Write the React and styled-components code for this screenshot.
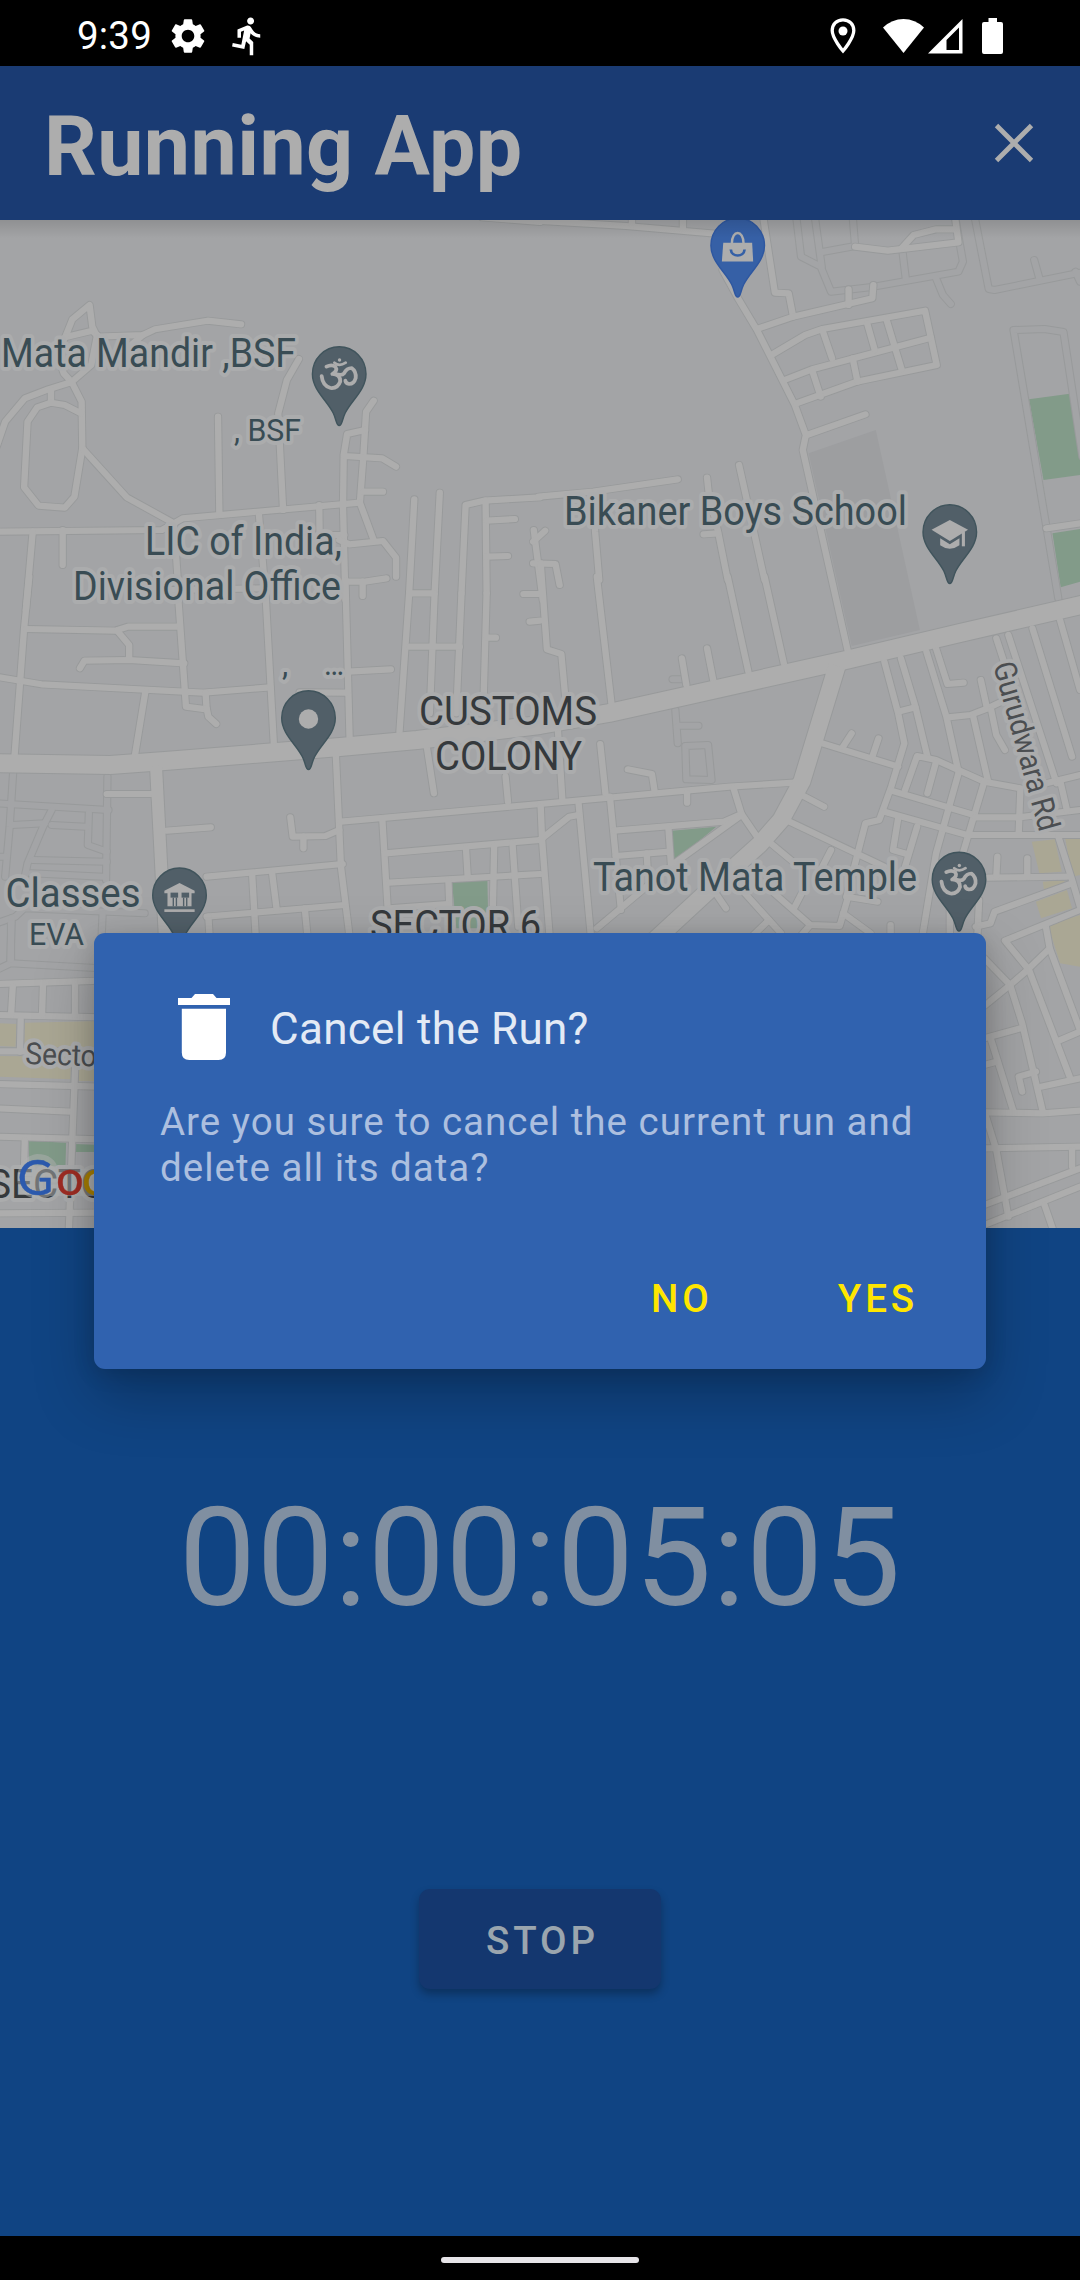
import React from "react";
import styled, { createGlobalStyle } from "styled-components";
import { MdSettings, MdDirectionsRun } from "react-icons/md";

const GlobalStyle = createGlobalStyle`
  html, body { margin: 0; padding: 0; background: #000; }
  body { font-family: Roboto, "Noto Sans", sans-serif; }
  *, *::before, *::after { box-sizing: border-box; }
`;

const Screen = styled.div`
  position: relative;
  display: flex;
  flex-direction: column;
  width: 1080px;
  height: 2280px;
  overflow: hidden;
  background: #000;
`;

const StatusBar = styled.header`
  display: flex;
  justify-content: space-between;
  align-items: center;
  flex: none;
  height: 66px;
  padding: 5px 77px 0 77px;
  color: #fff;
`;

const StatusGroup = styled.div`
  display: flex;
  align-items: center;
  gap: ${(p) => p.$gap}px;
`;

const Clock = styled.span`
  width: 72px;
  font-size: 38.5px;
  line-height: 46px;
  letter-spacing: 0.2px;
  white-space: nowrap;
`;

const AppBar = styled.div`
  display: flex;
  justify-content: space-between;
  align-items: center;
  flex: none;
  height: 154px;
  padding: 8px 46px 0 44px;
  background: #1a3b73;
  color: #adadad;
`;

const AppTitle = styled.h1`
  margin: 0;
  font-size: 82.5px;
  font-weight: 700;
  line-height: 96px;
  letter-spacing: 0.4px;
  white-space: nowrap;
`;

const IconButton = styled.button`
  display: flex;
  padding: 0;
  margin-top: -8px;
  border: 0;
  background: none;
  color: inherit;
`;

const MapPane = styled.section`
  position: relative;
  flex: none;
  height: 1008px;
  background: #a3a4a6;

  &::after {
    content: "";
    position: absolute;
    inset: 0 0 auto 0;
    height: 18px;
    background: linear-gradient(rgba(0, 0, 0, 0.12), rgba(0, 0, 0, 0));
  }

  svg { display: block; }
`;

const RunPane = styled.section`
  display: flex;
  flex-direction: column;
  align-items: center;
  flex: 1;
  padding-top: 250px;
  background: #104483;
`;

const Timer = styled.div`
  font-size: 137.5px;
  line-height: 161px;
  letter-spacing: 0.4px;
  color: #808fa1;
  white-space: nowrap;
`;

const StopButton = styled.button`
  display: flex;
  align-items: center;
  justify-content: center;
  width: 242px;
  height: 100px;
  margin-top: 250px;
  padding: 2px 0 0 5px;
  border: 0;
  border-radius: 11px;
  background: #14376f;
  box-shadow: 0 5px 9px rgba(0, 0, 0, 0.28);
  color: #9aa5ae;
  font: 500 38.5px Roboto, sans-serif;
  letter-spacing: 3.9px;
`;

const NavBar = styled.footer`
  display: flex;
  justify-content: center;
  flex: none;
  height: 44px;
  padding-top: 21px;
`;

const NavHandle = styled.div`
  width: 198px;
  height: 6px;
  border-radius: 3px;
  background: #e6e4e8;
`;

const Dialog = styled.div`
  position: absolute;
  left: 94px;
  top: 933px;
  display: flex;
  flex-direction: column;
  width: 892px;
  height: 436px;
  padding: 61px 66px 0;
  border-radius: 11px;
  background: #3062af;
  box-shadow: 0 26px 60px rgba(0, 0, 0, 0.26), 0 4px 22px rgba(0, 0, 0, 0.14);
`;

const DialogHeader = styled.div`
  display: flex;
  align-items: center;
  gap: 40px;
  height: 66px;
  padding-left: 18px;
`;

const DialogTitle = styled.h2`
  margin: 4px 0 0;
  font-size: 44px;
  font-weight: 400;
  line-height: 52px;
  letter-spacing: 0.3px;
  color: #e3eaf5;
  white-space: nowrap;
`;

const DialogMessage = styled.p`
  margin: 39px 0 0;
  font-size: 38.5px;
  line-height: 46px;
  letter-spacing: 1px;
  color: #acbfdf;
  white-space: nowrap;
`;

const DialogActions = styled.div`
  display: flex;
  justify-content: flex-end;
  gap: 125px;
  margin: 85px 2px 0 0;
`;

const DialogAction = styled.button`
  padding: 0;
  border: 0;
  background: none;
  color: #ffe600;
  font: 500 38.5px/46px Roboto, sans-serif;
  letter-spacing: 3.9px;
`;

/* ---------- map data ---------- */

const SX = 540 / 1568;
const SY = 1 / 3;

/* Each tile has its own survey grid, placed on the map by origin. */
const TILES = [
  {
    at: [0, 210],
    main: [
      "M190 380 L210 328 L260 285 L268 350 L280 375",
      "M195 380 L268 362 L285 380 L415 375 L450 358 L603 332 L700 343",
      "M190 380 L165 430 L185 490 L208 516 L265 465 L282 375",
      "M375 410 L415 375",
      "M-10 710 L15 635 L72 565 L140 538 L208 516 L237 575 L239 715",
      "M148 540 L148 578",
      "M235 610 L188 585 L148 578 L108 592 L80 635 L70 832 L112 887 L188 893 L216 860 L239 715",
      "M239 715 L368 862 L505 940 L530 925 L1045 878 L1055 740 L1063 605 L1085 572",
      "M-10 965 L470 960 L505 940 L520 1170",
      "M182 960 L182 1065", "M95 965 L75 1200", "M633 620 L637 915",
      "M868 447 L833 510 L808 610 L822 900", "M752 915 L772 1170",
      "M927 885 L928 975 L1000 975", "M1060 660 L1008 672 L998 735 L996 890 L1003 1170",
      "M1000 738 L1110 745 L1150 770", "M1055 845 L1112 845", "M1045 878 L1085 990",
      "M985 990 L1015 1003 L1112 993 L1150 1043 L1150 1100",
      "M1000 1115 L1060 1115 L1122 1105", "M1053 1115 L1053 1158",
      "M1203 868 L1188 1150", "M1277 848 L1262 1150",
      "M1568 862 L1405 872 L1352 885 L1340 1150", "M1410 872 L1413 1150",
      "M1413 932 L1495 927", "M1413 1040 L1475 1038",
      "M1550 960 L1556 1010 L1576 1170", "M490 1140 L760 1135",
      "M1400 22 L1568 36",
    ],
    minor: [],
    green: [], sand: [], built: [],
  },
  {
    at: [540, 210],
    main: [
      "M-10 32 L250 48 L520 72", "M267 20 L267 45", "M415 20 L415 60",
      "M530 180 L575 265 L630 360 L740 585 L772 675 L763 720 L893 1320",
      "M648 20 L682 248 L722 250 L735 320",
      "M630 357 L735 320 L965 265 L968 225", "M896 285 L896 238",
      "M672 435 L770 375 L820 357 L1118 302 L1152 465 L920 515 L745 580",
      "M710 510 L790 478 L1135 383",
      "M820 360 L848 445", "M950 340 L972 420", "M1005 325 L1050 478",
      "M908 445 L922 515", "M790 480 L815 560", "M775 675 L945 613",
      "M-4 860 L155 845 L400 808", "M155 850 L160 965 L172 1110",
      "M485 803 L490 850 L517 965 L545 1110", "M578 765 L620 960 L652 1110",
      "M517 970 L475 973", "M-20 995 L15 962", "M-20 1060 L45 1062 L57 1125",
      "M1470 955 L1568 940",
      "M915 110 L1010 122 L1215 97 L1205 20", "M1050 115 L1085 75 L1150 58 L1205 58",
    ],
    minor: [
      "M744 20 L758 140 L815 170 L845 245 L970 230 L1215 185 L1228 155 L1205 20",
      "M798 20 L818 170", "M908 20 L915 108 L820 126", "M1052 120 L1062 205",
      "M1150 205 L1170 255 L1193 282",
      "M1262 20 L1303 237 L1320 240 L1568 188", "M1435 150 L1450 205", "M1555 185 L1568 215",
      "M1505 1165 L1375 360 L1465 357 L1520 366 L1575 740",
    ],
    green: ["1420,568 1538,551 1568,735 1568,795 1462,810", "1488,970 1568,957 1568,1115 1512,1132"],
    sand: [],
    built: ["780,730 975,660 1103,1260 905,1308"],
  },
  {
    at: [0, 580],
    main: [
      "M85 -10 L70 145 L42 530", "M75 147 L335 152 L372 140 L520 140",
      "M340 152 L375 195 L375 240", "M232 265 L245 242 L375 240 L535 250",
      "M-10 290 L120 313 L590 338 L785 322",
      "M518 60 L540 380 L600 388 L597 340", "M600 385 L605 410 L628 432",
      "M422 335 L392 525", "M772 60 L795 490", "M1003 0 L1015 470",
      "M1010 275 L1135 268", "M870 337 L1008 338",
      "M1188 40 L1160 455", "M1262 40 L1248 400", "M1340 40 L1325 400", "M1413 40 L1403 400",
      "M1190 200 L1335 200", "M1190 40 L1260 40", "M1413 173 L1440 173",
      "M1568 42 L1520 42", "M1568 122 L1538 125",
      "M310 642 L445 642", "M485 752 L612 742",
      "M843 712 L850 770 L945 768 L985 750", "M881 770 L881 805",
      "M975 520 L990 860 L1015 1070",
      "M990 725 L1568 672", "M1110 715 L1130 1060", "M1120 820 L1568 780",
      "M1130 908 L1568 882", "M600 890 L995 852", "M600 1010 L1000 975",
      "M732 880 L742 1060", "M790 878 L803 985", "M605 1010 L608 1060", "M885 985 L892 1060",
      "M1240 505 L1260 640", "M1468 590 L1475 665",
      "M1353 805 L1358 890", "M1435 795 L1430 1040", "M1488 790 L1505 1040",
      "M1302 900 L1305 985", "M1130 985 L1300 972",
    ],
    minor: [
      "M-10 670 L315 690", "M312 590 L308 900", "M38 580 L28 740 L15 890",
      "M35 735 L130 730", "M150 690 L125 740 L80 850 L70 900",
      "M258 700 L255 795 L310 815", "M150 735 L250 740", "M95 840 L310 845",
      "M90 880 L300 890", "M-10 830 L15 830",
      "M-10 1030 L45 1010 L70 985 L420 1000", "M34 1015 L30 1140", "M298 1000 L295 1070",
    ],
    green: ["1312,903 1415,893 1417,990 1385,1045 1325,1045"],
    sand: [], built: [],
  },
  {
    at: [540, 580],
    main: [
      "M2 -50 L20 208 L62 222 L75 370", "M165 -10 L208 375", "M545 -10 L605 275",
      "M652 -10 L708 250", "M412 235 L425 315", "M485 205 L503 300",
      "M0 672 L550 620 L750 607", "M52 450 L65 660", "M175 492 L190 640",
      "M255 568 L325 582 L333 635", "M427 640 L427 668",
      "M203 650 L235 990", "M112 670 L148 1070", "M0 780 L85 710 L112 705",
      "M2 680 L6 780 L15 900 L28 1070",
      "M215 752 L535 725 L585 702 L562 625", "M585 702 L640 785",
      "M585 705 L390 850 L165 1045", "M220 828 L375 815", "M373 745 L380 850", "M310 820 L312 860",
      "M820 490 L1040 560", "M880 500 L905 460", "M965 530 L983 475", "M760 645 L825 680",
      "M1000 245 L1040 400 L1058 490 L1020 620 L985 720 L945 730 L890 950",
      "M1048 235 L1090 380 L1125 530", "M1040 395 L1090 382",
      "M1122 215 L1180 410 L1215 575", "M1150 205 L1183 312 L1230 308",
      "M1185 412 L1250 405 L1300 385 L1340 365", "M1280 300 L1298 385",
      "M1258 410 L1300 600", "M1310 390 L1325 465 L1350 510",
      "M1325 175 L1355 270", "M1360 165 L1500 610", "M1430 145 L1545 530", "M1510 120 L1568 330",
      "M725 725 L1000 860", "M670 790 L740 850",
      "M1060 630 L1095 528 L1150 540 L1290 605 L1395 625 L1390 760",
      "M1150 545 L1125 640", "M1215 580 L1150 820 L1110 1070", "M1290 605 L1225 830",
      "M1020 632 L1260 705", "M1000 695 L1240 765 L1568 765",
      "M1265 712 L1390 712 L1568 690", "M1470 610 L1568 585", "M1510 600 L1530 690",
      "M1040 715 L1025 810 L1065 822", "M1095 740 L1060 860", "M845 810 L805 890",
      "M1300 893 L1530 890", "M1328 830 L1325 890", "M1415 835 L1415 890",
      "M1505 770 L1545 900 L1568 980", "M1275 960 L1270 1070",
      "M1545 910 L1320 995 L1308 1030 L1265 1040",
      "M595 940 L700 1060", "M680 940 L785 1035 L870 1038 L895 950", "M740 980 L765 930",
      "M880 1000 L960 1060", "M1018 1035 L1018 1070", "M510 940 L540 985", "M890 950 L980 965",
      "M665 1020 L620 1065", "M1190 900 L1190 1070", "M785 1035 L755 1070",
    ],
    minor: [
      "M385 298 L420 298", "M393 390 L400 490", "M400 437 L460 437",
      "M425 598 L422 498 L488 495 L498 600 L425 598",
    ],
    green: ["383,752 512,740 388,845"],
    sand: [
      "1428,785 1495,778 1515,875 1450,880", "1525,775 1568,770 1568,885 1545,890",
      "1460,905 1520,900 1530,915 1465,940", "1440,965 1530,930 1545,985 1455,1015",
      "1475,1035 1568,1005 1568,1160 1510,1150",
    ],
    built: [],
  },
  {
    at: [0, 920],
    main: [
      "M-10 192 L290 182", "M-10 285 L290 292", "M-10 394 L290 394", "M-10 492 L290 500",
      "M-10 565 L205 575", "M-10 650 L290 658", "M60 300 L58 395",
      "M37 200 L32 285", "M125 190 L122 285", "M218 190 L218 285", "M220 400 L210 655 L200 930",
      "M-10 880 L290 878", "M72 660 L70 740",
    ],
    minor: ["M-10 150 L30 130 L290 145", "M32 10 L32 120"],
    green: ["83,662 192,668 190,740 85,735", "216,672 275,674 275,696 216,696"],
    sand: [
      "0,310 48,312 45,380 0,378", "72,308 290,303 290,385 70,385",
      "0,408 205,410 205,478 0,470", "228,410 290,412 290,483 228,483",
    ],
    built: [],
  },
  {
    at: [540, 920],
    main: [
      "M1290 115 L1365 195 L1410 155 L1480 85 L1468 15",
      "M1568 -30 L1350 62 L1420 150 L1540 475", "M1365 195 L1290 258",
      "M1365 195 L1400 310 L1460 575", "M1290 355 L1395 325", "M1310 360 L1375 575",
      "M1290 435 L1325 425", "M1480 85 L1568 330", "M1500 365 L1568 335",
      "M1440 455 L1390 470 L1400 515", "M1455 500 L1568 475",
      "M1290 577 L1460 580 L1568 572", "M1290 685 L1568 680", "M1295 590 L1325 690 L1360 890",
      "M1545 690 L1545 740", "M1290 855 L1568 745", "M1290 915 L1568 800", "M1465 855 L1490 930",
    ],
    minor: [],
    green: [],
    sand: [],
    built: [],
  },
];

/* Trunk roads in map coordinates: path and width. */
const TRUNKS = [
  ["M-10 763 L110 765 L165 761 L340 747 L417 740 L540 725 L609 713 L690 695 L846 660 L960 633 L1090 603", 18],
  ["M837 666 L802 781 L781 820 L760 844 L720 880 L655 940", 17],
  ["M156 766 L165 940", 12],
];

const tileTransform = ([x, y]) => `translate(${x} ${y}) scale(${SX} ${SY})`;

const Areas = ({ kind, fill }) =>
  TILES.map((t, i) => (
    <g key={i} transform={tileTransform(t.at)} fill={fill}>
      {t[kind].map((p) => <polygon key={p} points={p} />)}
    </g>
  ));

const Roads = ({ kind, stroke, width }) =>
  TILES.map((t, i) => (
    <g key={i} transform={tileTransform(t.at)} fill="none" stroke={stroke}
      strokeWidth={width} strokeLinecap="round" strokeLinejoin="round">
      {t[kind].map((d) => <path key={d} d={d} />)}
    </g>
  ));

const Trunks = ({ stroke, grow }) => (
  <g fill="none" stroke={stroke} strokeLinejoin="round">
    {TRUNKS.map(([d, w]) => <path key={d} d={d} strokeWidth={w + grow} />)}
  </g>
);

const LIGHT = "#adadad";

const OmGlyph = () => (
  <g transform="scale(.344 .333)" fill="none" stroke={LIGHT} strokeWidth="11" strokeLinecap="round" strokeLinejoin="round">
    <path d="M-37 -22 Q-22 -30 -11 -22 Q-3 -10 -20 0 Q4 2 3 22 Q-4 44 -25 42 Q-48 36 -51 6" />
    <path d="M-10 0 Q8 6 14 -2 Q22 -18 36 -18 Q50 -8 48 12 Q43 30 29 30 Q19 28 18 20" />
    <path d="M-14 -34 Q0 -21 19 -34" strokeWidth="8" />
    <circle cx="1" cy="-42" r="5" fill={LIGHT} stroke="none" />
  </g>
);

const CapGlyph = () => (
  <g transform="translate(0 1) scale(.344 .333)" fill={LIGHT}>
    <polygon points="-53,-10 0,-39 53,-10 0,24" />
    <path d="M-28 16 V37 Q0 58 28 37 V16 L0 34 Z" />
    <rect x="35" y="-4" width="9" height="44" />
  </g>
);

const MuseumGlyph = () => (
  <g transform="scale(.344 .333)" fill={LIGHT}>
    <polygon points="-44,-14 0,-37 44,-14 44,-6 -44,-6" />
    <rect x="-35" y="-7" width="70" height="40" />
    <rect x="-44" y="42" width="88" height="8" />
    <g fill="#515f68">
      <rect x="-26" y="-8" width="22" height="15" />
      <rect x="6" y="-8" width="22" height="15" />
      <rect x="-20" y="7" width="4" height="26" />
      <rect x="-11" y="7" width="4" height="26" />
      <rect x="10" y="7" width="4" height="26" />
      <rect x="19" y="7" width="4" height="26" />
    </g>
  </g>
);

const BagGlyph = () => (
  <g transform="scale(.344 .333)">
    <polygon points="-42,-8 42,-8 45,48 -46,48" fill={LIGHT} />
    <path d="M-17 -6 C-17 -48 17 -48 17 -6" fill="none" stroke={LIGHT} strokeWidth="7" />
    <path d="M-20 12 C-18 36 18 36 20 12" fill="none" stroke="#3560a6" strokeWidth="8" />
  </g>
);

const DotGlyph = () => <circle r="9.7" cy="1" fill={LIGHT} />;

const Pin = ({ x, y, blue, children }) => (
  <g transform={`translate(${x} ${y})`}>
    <path
      d="M0 51.5 C-3 51.5 -2.6 46 -6 39 C-12 26.500 -26.800 16 -26.800 0 A26.800 27.300 0 1 1 26.800 0 C26.800 16 12 26.500 6 39 C2.600 46 3 51.500 0 51.500Z"
      fill={blue ? "#3660a6" : "#515f68"} stroke={blue ? "#2e57a0" : "#40545c"} strokeWidth="1.400" />
    {children}
  </g>
);

const MapText = styled.text`
  font-family: Roboto, "Noto Sans", sans-serif;
  font-size: ${(p) => p.$size || 40}px;
  fill: ${(p) => p.$fill || "#394c54"};
  stroke: #abacad;
  stroke-width: 8px;
  stroke-linejoin: round;
  paint-order: stroke;
`;

const Label = ({ x, y, w, size, fill, rotate, children }) => (
  <MapText $size={size} $fill={fill} x={x} y={y} textLength={w}
    lengthAdjust={w ? "spacingAndGlyphs" : undefined}
    transform={rotate ? `rotate(${rotate} ${x} ${y})` : undefined}>
    {children}
  </MapText>
);

const Logo = styled.text`
  font-family: Lato, sans-serif;
  font-size: 49px;
  font-weight: 400;
`;

const GOOGLE = [
  ["G", 17.5, "#2c5aae"], ["o", 56, "#9f2c23"], ["o", 82, "#a87f03"],
];

const CityMap = () => (
  <svg width="1080" height="1008" viewBox="0 220 1080 1008">
    <Areas kind="built" fill="#9d9ea0" />
    <Areas kind="green" fill="#829b89" />
    <Areas kind="sand" fill="#aaa794" />
    <Roads kind="minor" stroke="#989a9b" width={24} />
    <Roads kind="minor" stroke="#a3a4a6" width={18} />
    <Roads kind="main" stroke="#989a9b" width={24} />
    <Trunks stroke="#989a9b" grow={2} />
    <Roads kind="main" stroke="#adadad" width={18.500} />
    <Trunks stroke="#adadad" grow={0} />

    <Label x={1} y={366.700} w={295}>Mata Mandir ,BSF</Label>
    <Label x={234} y={440.700} w={67} size={31.500}>, BSF</Label>
    <Label x={145} y={555} w={197}>LIC of India,</Label>
    <Label x={73} y={600} w={268}>Divisional Office</Label>
    <Label x={282} y={675} size={31.500}>,</Label>
    <Label x={324} y={674.500} w={20} size={31.500}>…</Label>
    <Label x={419} y={725} w={178} fill="#35393c">CUSTOMS</Label>
    <Label x={435} y={770} w={147} fill="#35393c">COLONY</Label>
    <Label x={370} y={938.500} w={171} fill="#35393c">SECTOR 6</Label>
    <Label x={564} y={525} w={343}>Bikaner Boys School</Label>
    <Label x={593} y={890.700} w={324}>Tanot Mata Temple</Label>
    <Label x={5.500} y={906.700} w={135}>Classes</Label>
    <Label x={29} y={945} w={55} size={31.500}>EVA</Label>
    <Label x={993} y={665} w={174} size={31} fill="#4b4e51" rotate={74.500}>Gurudwara Rd</Label>
    <Label x={25} y={1064} w={81} size={30.500} fill="#4b4e51" rotate={2}>Sector</Label>
    <Label x={-12} y={1197.500} w={143} fill="#35393c">SECTOR</Label>

    <Pin x={339.200} y={374}><OmGlyph /></Pin>
    <Pin x={737.700} y={245.500} blue><BagGlyph /></Pin>
    <Pin x={949.800} y={532}><CapGlyph /></Pin>
    <Pin x={308.500} y={718}><DotGlyph /></Pin>
    <Pin x={179.500} y={895.300}><MuseumGlyph /></Pin>
    <Pin x={959} y={879.500}><OmGlyph /></Pin>

    <g fill="#b0b1b2" fillOpacity="0.5">
      <path d="M37 1154 C49 1154 56 1160 58 1169 H104 V1196 H50 C40 1202 24 1198 19 1188 C14 1172 21 1156 37 1154Z" />
    </g>
    {GOOGLE.map(([c, x, fill]) => (
      <Logo key={x} x={x} y={1194.500} fill={fill} stroke={fill} strokeWidth="0.4">{c}</Logo>
    ))}
  </svg>
);

/* ---------- icons ---------- */

const LocationIcon = () => (
  <svg width="26" height="36" viewBox="0 0 26 36">
    <path d="M13 1.800 C6.500 1.800 2.200 6.500 2.200 12.600 C2.200 20.500 13 33 13 33 C13 33 23.800 20.500 23.800 12.600 C23.800 6.500 19.500 1.800 13 1.800Z"
      fill="none" stroke="#fff" strokeWidth="3.300" />
    <circle cx="13" cy="13" r="4.500" fill="#fff" />
  </svg>
);

const WifiIcon = () => (
  <svg width="41" height="36" viewBox="0 0 41 36">
    <path d="M0 9.500 Q9 1 20.500 1 Q32 1 41 9.500 L20.500 35Z" fill="#fff" />
  </svg>
);

const SignalIcon = () => (
  <svg width="35" height="36" viewBox="0 0 35 36">
    <path d="M0 35.500 L34.500 1 V35.500Z M18.500 32 H31 V9.500 L18.500 22Z" fill="#fff" fillRule="evenodd" />
  </svg>
);

const BatteryIcon = () => (
  <svg width="21" height="36" viewBox="0 0 21 36">
    <path d="M6.500 0 H15 V4 H19 Q21 4 21 6 V34 Q21 36 19 36 H2 Q0 36 0 34 V6 Q0 4 2 4 H6.500Z" fill="#fff" />
  </svg>
);

const CloseIcon = () => (
  <svg width="40" height="40" viewBox="0 0 40 40" stroke="currentColor" strokeWidth="4.800">
    <path d="M2.500 2.500 L37.500 37.500 M37.500 2.500 L2.500 37.500" />
  </svg>
);

const TrashIcon = () => (
  <svg width="52" height="66" viewBox="0 0 52 66" fill="#fff">
    <path d="M0 4 H13.500 L17 0 H35 L38.500 4 H52 V11 H0Z" />
    <path d="M3.800 14.700 H48 V58.500 Q48 66 40.500 66 H11.300 Q3.800 66 3.800 58.500Z" />
  </svg>
);

export default function App() {
  return (
    <>
      <GlobalStyle />
      <Screen>
        <StatusBar>
          <StatusGroup $gap={18}>
            <Clock>9:39</Clock>
            <MdSettings size={42} />
            <MdDirectionsRun size={42} />
          </StatusGroup>
          <StatusGroup $gap={19}>
            <StatusGroup $gap={27}>
              <LocationIcon />
              <StatusGroup $gap={4}>
                <WifiIcon />
                <SignalIcon />
              </StatusGroup>
            </StatusGroup>
            <BatteryIcon />
          </StatusGroup>
        </StatusBar>
        <AppBar>
          <AppTitle>Running App</AppTitle>
          <IconButton aria-label="Close"><CloseIcon /></IconButton>
        </AppBar>
        <MapPane><CityMap /></MapPane>
        <RunPane>
          <Timer>00:00:05:05</Timer>
          <StopButton>STOP</StopButton>
        </RunPane>
        <NavBar><NavHandle /></NavBar>
        <Dialog role="dialog">
          <DialogHeader>
            <TrashIcon />
            <DialogTitle>Cancel the Run?</DialogTitle>
          </DialogHeader>
          <DialogMessage>
            Are you sure to cancel the current run and<br />delete all its data?
          </DialogMessage>
          <DialogActions>
            <DialogAction>NO</DialogAction>
            <DialogAction>YES</DialogAction>
          </DialogActions>
        </Dialog>
      </Screen>
    </>
  );
}
